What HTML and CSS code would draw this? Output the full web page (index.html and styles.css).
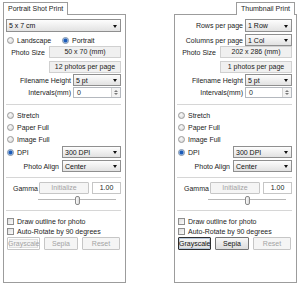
FILE: index.html
```html
<!DOCTYPE html>
<html>
<head>
<meta charset="utf-8">
<title>Print options</title>
<link rel="stylesheet" href="styles.css">
</head>
<body>
<div class="page">

  <!-- portrait shot print -->
  <div class="pane">
    <div class="tabs"><div class="tab">Portrait Shot Print</div></div>
    <div class="panel">
      <div class="row r-first"><div class="select grow">5 x 7 cm</div></div>
      <div class="row r-radios">
        <span class="radio"></span><span class="rtext w-land">Landscape</span>
        <span class="radio on"></span><span class="rtext">Portrait</span>
      </div>
      <div class="row r-size"><span class="label w-size">Photo Size</span><div class="field grow">50 x 70 (mm)</div></div>
      <div class="row r-count"><span class="label w-size"></span><div class="field grow">12 photos per page</div></div>
      <div class="row r-fname"><span class="label w-wide">Filename Height</span><div class="select grow">5 pt</div></div>
      <div class="row r-int"><span class="label w-wide">Intervals(mm)</span><div class="spin grow"><span class="spin-val">0</span><span class="spin-btn"><i class="up"></i><i class="down"></i></span></div></div>
      <div class="sep s-1"></div>
      <div class="row r-opt first"><span class="radio"></span><span class="rtext">Stretch</span></div>
      <div class="row r-opt"><span class="radio"></span><span class="rtext">Paper Full</span></div>
      <div class="row r-opt"><span class="radio"></span><span class="rtext">Image Full</span></div>
      <div class="row r-dpi"><span class="radio on"></span><span class="rtext">DPI</span><div class="select dpi">300 DPI</div></div>
      <div class="row r-align"><span class="label grow">Photo Align</span><div class="select dpi">Center</div></div>
      <div class="sep s-2"></div>
      <div class="row r-gamma"><span class="glabel">Gamma</span><div class="btn init">Initialize</div><div class="field val grow">1.00</div></div>
      <div class="slider s-left"><span class="thumb"></span></div>
      <div class="sep s-3"></div>
      <div class="row r-check first"><span class="check"></span><span class="ctext">Draw outline for photo</span></div>
      <div class="row r-check"><span class="check"></span><span class="ctext">Auto-Rotate by 90 degrees</span></div>
      <div class="row r-btns">
        <div class="btn b-gray focus">Grayscale</div>
        <div class="btn b-sepia">Sepia</div>
        <div class="btn b-reset">Reset</div>
      </div>
    </div>
  </div>

  <!-- thumbnail print -->
  <div class="pane">
    <div class="tabs right"><div class="tab">Thumbnail Print</div></div>
    <div class="panel">
      <div class="row r-first"><span class="label w-rows">Rows per page</span><div class="select grow">1 Row</div></div>
      <div class="row r-radios"><span class="label w-rows">Columns per page</span><div class="select grow">1 Col</div></div>
      <div class="row r-size"><span class="label w-size">Photo Size</span><div class="field grow">202 x 286 (mm)</div></div>
      <div class="row r-count"><span class="label w-size"></span><div class="field grow">1 photos per page</div></div>
      <div class="row r-fname"><span class="label w-rows">Filename Height</span><div class="select grow">5 pt</div></div>
      <div class="row r-int"><span class="label w-rows">Intervals(mm)</span><div class="spin grow"><span class="spin-val">0</span><span class="spin-btn"><i class="up"></i><i class="down"></i></span></div></div>
      <div class="sep s-1"></div>
      <div class="row r-opt first"><span class="radio"></span><span class="rtext">Stretch</span></div>
      <div class="row r-opt"><span class="radio"></span><span class="rtext">Paper Full</span></div>
      <div class="row r-opt"><span class="radio"></span><span class="rtext">Image Full</span></div>
      <div class="row r-dpi"><span class="radio on"></span><span class="rtext">DPI</span><div class="select dpi">300 DPI</div></div>
      <div class="row r-align"><span class="label grow">Photo Align</span><div class="select dpi">Center</div></div>
      <div class="sep s-2"></div>
      <div class="row r-gamma"><span class="glabel">Gamma</span><div class="btn init">Initialize</div><div class="field val grow">1.00</div></div>
      <div class="slider s-right"><span class="thumb"></span></div>
      <div class="sep s-3"></div>
      <div class="row r-check first"><span class="check"></span><span class="ctext">Draw outline for photo</span></div>
      <div class="row r-check"><span class="check"></span><span class="ctext">Auto-Rotate by 90 degrees</span></div>
      <div class="row r-btns">
        <div class="btn b-gray on default">Grayscale</div>
        <div class="btn b-sepia on">Sepia</div>
        <div class="btn b-reset">Reset</div>
      </div>
    </div>
  </div>

</div>
</body>
</html>
```

FILE: styles.css
```css
* {
  box-sizing: border-box;
}

body {
  margin: 0;
  background: #fff;
  font-family: "Liberation Sans", Arial, sans-serif;
  font-size: 7px;
  color: #1c1c1c;
}

.page {
  display: flex;
  gap: 48px;
  padding: 2px 0 0 3px;
}

.pane {
  width: 123px;
  display: flex;
  flex-direction: column;
}

/* tabs */
.tabs {
  display: flex;
  height: 13px;
  margin-bottom: -1px;
  position: relative;
  z-index: 1;
}
.tabs.right {
  justify-content: flex-end;
  padding-right: 2px;
}
.tab {
  height: 13px;
  padding: 0 4px;
  border: 1px solid #9c9c9c;
  border-bottom: none;
  background: #fff;
  line-height: 11px;
  white-space: nowrap;
}

.panel {
  height: 269px;
  border: 1px solid #9c9c9c;
  background: #fff;
  padding: 0 4px 0 2px;
  display: flex;
  flex-direction: column;
}

/* rows */
.row {
  display: flex;
  align-items: center;
  white-space: nowrap;
}
.grow { flex: 1; min-width: 0; }

.r-first  { margin-top: 4px; height: 13px; }
.r-radios { margin-top: 2px; height: 12px; }
.r-size   { margin-top: 0; height: 12px; }
.r-count  { margin-top: 3px; height: 12px; }
.r-fname  { margin-top: 1px; height: 12px; }
.r-int    { margin-top: 1px; height: 11px; }
.r-opt    { margin-top: 2px; height: 10px; }
.r-opt.first { margin-top: 5px; }
.r-dpi    { margin-top: 2px; height: 12px; }
.r-align  { margin-top: 2px; height: 12px; }
.r-gamma  { margin-top: 4px; height: 12px; }
.r-check  { height: 10px; }
.r-check.first { margin-top: 5px; }
.r-btns   { margin-top: 1px; height: 13px; padding-left: 1px; gap: 4px; }

.label {
  text-align: right;
  padding-right: 3px;
  color: #222;
}
.w-size { width: 43px; padding-right: 4px; }
.w-wide { width: 67px; padding-right: 2px; }
.w-rows { width: 68px; padding-right: 2px; }
.w-land { width: 47px; }

.sep {
  height: 1px;
  background: #d6d6d6;
  flex: none;
}
.s-1 { margin-top: 6px; }
.s-2 { margin-top: 5px; }
.s-3 { margin-top: 6px; }

/* controls */
.select {
  height: 100%;
  border: 1px solid #8f8f8f;
  background: linear-gradient(#fdfdfd, #e2e2e2);
  padding-left: 2px;
  display: flex;
  align-items: center;
  position: relative;
  color: #111;
}
.select::after {
  content: "";
  position: absolute;
  right: 3px;
  top: 50%;
  margin-top: -1px;
  border-left: 2.5px solid transparent;
  border-right: 2.5px solid transparent;
  border-top: 3px solid #111;
}
.select.dpi {
  width: 59px;
  flex: none;
}

.field {
  height: 100%;
  border: 1px solid #d0d0d0;
  background: #f0f0f0;
  text-align: center;
  line-height: 10px;
  color: #222;
}
.field.val {
  background: #fff;
  border-color: #c6c6c6;
}

.spin {
  height: 100%;
  border: 1px solid #b4b8be;
  background: #fff;
  display: flex;
}
.spin-val {
  flex: 1;
  padding-left: 3px;
  line-height: 9px;
}
.spin-btn {
  width: 9px;
  border-left: 1px solid #d4d4d4;
  background: #f3f3f3;
  display: flex;
  flex-direction: column;
  align-items: center;
  justify-content: space-evenly;
}
.spin-btn i {
  width: 0;
  height: 0;
  border-left: 2px solid transparent;
  border-right: 2px solid transparent;
}
.spin-btn .up { border-bottom: 2px solid #7a7a7a; }
.spin-btn .down { border-top: 2px solid #7a7a7a; }

.radio {
  width: 7px;
  height: 7px;
  flex: none;
  margin-left: 1px;
  border-radius: 50%;
  border: 1px solid #9a9a9a;
  background: radial-gradient(circle at 40% 35%, #fafafa, #d2d2d2);
}
.radio.on {
  border-color: #7a8ea8;
  background: radial-gradient(circle, #1c5bb8 0 1.5px, #8fb4e6 2.2px, #e9eff8 3px);
}
.rtext {
  padding-left: 3px;
  color: #1a1a1a;
}
.r-dpi .rtext { flex: 1; }

.check {
  width: 7px;
  height: 7px;
  flex: none;
  margin-left: 1px;
  border: 1px solid #8e8e8e;
  background: linear-gradient(135deg, #dedede, #fbfbfb);
}
.ctext {
  padding-left: 3px;
}

.glabel {
  width: 33px;
  padding-left: 7px;
  flex: none;
}

.btn {
  height: 100%;
  border: 1px solid #c6c6c6;
  border-radius: 1px;
  background: #f5f5f5;
  color: #a3a3a3;
  text-align: center;
  line-height: 10px;
  flex: none;
}
.btn.init {
  width: 50px;
  margin-right: 3px;
  line-height: 10px;
}
.btn.on {
  border-color: #767676;
  background: linear-gradient(#f7f7f7, #dddddd);
  color: #111;
}
.btn.default {
  border-color: #2e2e2e;
  box-shadow: inset 0 0 0 1px #b9c9dc;
}
.btn.focus {
  box-shadow: inset 0 0 0 1px #fff, inset 0 0 0 2px #dedede;
}
.r-btns .btn { line-height: 11px; }
.b-gray  { width: 33px; }
.b-sepia { width: 34px; }
.b-reset { width: 38px; }

/* gamma slider */
.slider {
  height: 8px;
  margin-top: 2px;
  width: 78px;
  display: flex;
  align-items: center;
  justify-content: center;
  background: linear-gradient(transparent 3px, #b8b8b8 3px, #b8b8b8 4px, #fff 4px, #fff 5px, transparent 5px);
}
.s-left  { margin-left: 32px; }
.s-right { margin-left: 31px; }
.thumb {
  width: 5px;
  height: 9px;
  border: 1px solid #8a8a8a;
  border-radius: 2px;
  background: linear-gradient(90deg, #fdfdfd, #dcdcdc);
}
```
